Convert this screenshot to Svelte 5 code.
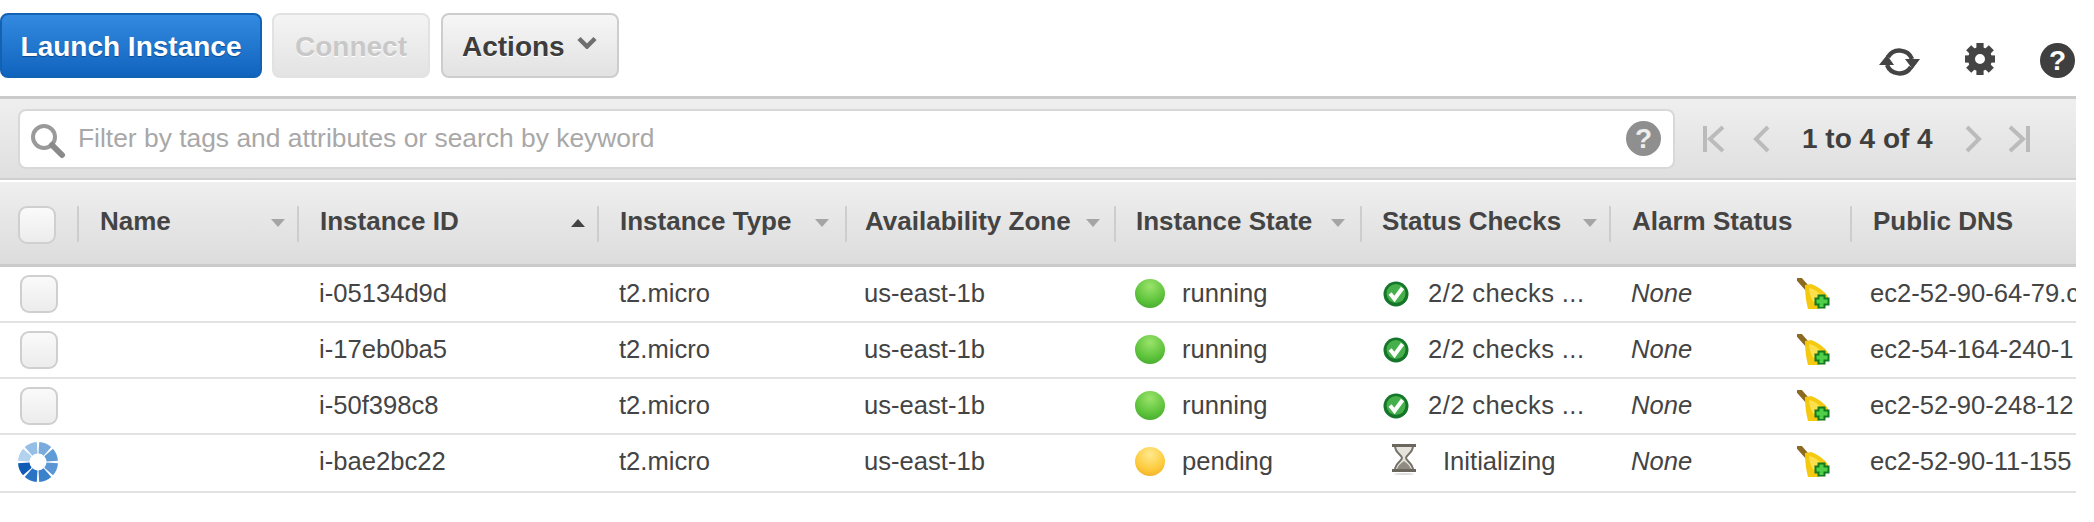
<script>
  const rows = [
    { id: 'i-05134d9d', state: 'running', status: 'ok', dns: 'ec2-52-90-64-79.compute-1.amazonaws.com' },
    { id: 'i-17eb0ba5', state: 'running', status: 'ok', dns: 'ec2-54-164-240-1' },
    { id: 'i-50f398c8', state: 'running', status: 'ok', dns: 'ec2-52-90-248-12' },
    { id: 'i-bae2bc22', state: 'pending', status: 'init', dns: 'ec2-52-90-11-155' }
  ];
  const headers = [
    { label: 'Name', sort: 'down' },
    { label: 'Instance ID', sort: 'up' },
    { label: 'Instance Type', sort: 'down' },
    { label: 'Availability Zone', sort: 'down' },
    { label: 'Instance State', sort: 'down' },
    { label: 'Status Checks', sort: 'down' },
    { label: 'Alarm Status', sort: '' },
    { label: 'Public DNS', sort: '' }
  ];
  const teeth = [0, 45, 90, 135, 180, 225, 270, 315];
  const spinColors = ['#0f5bb5', '#2a74c6', '#3b82cc', '#5a97d4', '#5f9bd6', '#7aabdd', '#95bfe6', '#b3d2ef'];
  function wedge(i) {
    const s = 180 + i * 45 + 3.5;
    const e = 180 + (i + 1) * 45 - 3.5;
    const pt = (r, a) => {
      const t = (a * Math.PI) / 180;
      return `${(20 + r * Math.cos(t)).toFixed(2)} ${(20 - r * Math.sin(t)).toFixed(2)}`;
    };
    return `M${pt(20, s)} A20 20 0 0 0 ${pt(20, e)} L${pt(8.5, e)} A8.5 8.5 0 0 1 ${pt(8.5, s)} Z`;
  }
</script>

{#snippet help(cls)}
  <span class="help {cls}">?</span>
{/snippet}

<div class="page">
  <div class="toolbar">
    <button class="btn primary">Launch Instance</button>
    <button class="btn disabled">Connect</button>
    <button class="btn actions">Actions
      <svg class="chev" width="20" height="13" viewBox="0 0 20 13"><path d="M2 2.5 10 10.5 18 2.5" fill="none" stroke="#6f6f6f" stroke-width="4.5"/></svg>
    </button>
    <div class="tools">
      <svg class="refresh" width="41" height="32" viewBox="0 0 41 32">
        <path d="M9 11A13.5 13.5 0 0 1 33 13M32 21A13.5 13.5 0 0 1 8 19" fill="none" stroke="#444" stroke-width="4.5"/>
        <path d="M26 13H41L33.5 23ZM0 19H15L8 9Z" fill="#444"/>
      </svg>
      <svg width="30" height="32" viewBox="0 0 30 32">
        <g transform="translate(15 16)">
          {#each teeth as a}
            <rect x="-3.6" y="-16" width="7.2" height="8" fill="#444" transform="rotate({a})"/>
          {/each}
          <circle r="8.5" fill="none" stroke="#444" stroke-width="7"/>
        </g>
      </svg>
      {@render help('dark')}
    </div>
  </div>

  <div class="filter">
    <div class="search">
      <svg class="glass" width="36" height="36" viewBox="0 0 36 36">
        <circle cx="14" cy="14" r="11" fill="#fff" stroke="#9a9a9a" stroke-width="4"/>
        <path d="M22 22 32 32" stroke="#8a8a8a" stroke-width="6" stroke-linecap="round"/>
      </svg>
      <span class="placeholder">Filter by tags and attributes or search by keyword</span>
      {@render help('grey')}
    </div>
    <div class="pager">
      <svg width="22" height="28" viewBox="0 0 22 28"><path d="M2 1V27M20 2 7 14 20 26" fill="none" stroke="#bbb" stroke-width="4"/></svg>
      <svg class="prev" width="17" height="28" viewBox="0 0 17 28"><path d="M15 2 3 14 15 26" fill="none" stroke="#bbb" stroke-width="4"/></svg>
      <span class="count">1 to 4 of 4</span>
      <svg class="next" width="17" height="28" viewBox="0 0 17 28"><path d="M2 2 14 14 2 26" fill="none" stroke="#bbb" stroke-width="4"/></svg>
      <svg class="end" width="22" height="28" viewBox="0 0 22 28"><path d="M2 2 15 14 2 26M20 1V27" fill="none" stroke="#bbb" stroke-width="4"/></svg>
    </div>
  </div>

  <div class="table">
    <div class="head grid">
      <div class="hcheck"><span class="box"></span></div>
      {#each headers as h}
        <div class="hcell">
          <span>{h.label}</span>
          {#if h.sort}<i class="arrow {h.sort}"></i>{/if}
        </div>
      {/each}
    </div>

    {#each rows as r, i}
      <div class="row grid" class:tail={i === 3}>
        <div class="cell first">
          {#if r.state === 'running'}
            <span class="box"></span>
          {:else}
            <svg class="spin" width="40" height="40" viewBox="0 0 40 40">
              {#each spinColors as c, n}
                <path d={wedge(n)} fill={c}/>
              {/each}
            </svg>
          {/if}
        </div>
        <div class="cell"></div>
        <div class="cell">{r.id}</div>
        <div class="cell">t2.micro</div>
        <div class="cell zone">us-east-1b</div>
        <div class="cell state"><span class="orb {r.state}"></span>{r.state}</div>
        <div class="cell status">
          {#if r.status === 'ok'}
            <svg class="check" width="26" height="26" viewBox="0 0 26 26">
              <circle cx="13" cy="13" r="12.5" fill="#15752a"/>
              <circle cx="13" cy="12.5" r="9.5" fill="#45b04a"/>
              <path d="M7 12.5 11.5 18 19.5 7" fill="none" stroke="#fff" stroke-width="4"/>
            </svg>
            <span class="wide">2/2 checks ...</span>
          {:else}
            <svg class="hour" width="26" height="32" viewBox="0 0 26 32">
              <path d="M4 3H22C22 10 15 12 15 15C15 18 22 20 22 27H4C4 20 11 18 11 15C11 12 4 10 4 3Z" fill="#e6e3dc" stroke="#77736b" stroke-width="2"/>
              <path d="M6 26C8 21 11 20 13 18C15 20 18 21 20 26Z" fill="#8f8b83"/>
              <rect x="1" y="1" width="24" height="3" fill="#6a665e"/>
              <rect x="1" y="26" width="24" height="3" fill="#6a665e"/>
              <ellipse cx="13" cy="31" rx="10" ry="1" fill="#ddd"/>
            </svg>
            Initializing
          {/if}
        </div>
        <div class="cell alarm">
          <em>None</em>
          <svg class="broom" width="34" height="31" viewBox="0 0 34 31">
            <path d="M2.5 1.5 10 10" stroke="#8c6a1f" stroke-width="5.5" stroke-linecap="round"/>
            <path d="M8 7 14 6C22 9 30 15 32 21L22 31H11C9 24 8 15 8 7Z" fill="#f5c90f"/>
            <path d="M12 10C18 11 23 15 25 19L16 24C14 19 12 15 12 10Z" fill="#fbe04e"/>
            <path d="M20.5 16.5H28.5V19.5H32.5V27.5H28.5V30.5H20.5V27.5H17.5V19.5H20.5Z" fill="#137a1f"/>
            <path d="M22.5 18.5H26.5V21.5H30.5V25.5H26.5V29H22.5V25.5H19.5V21.5H22.5Z" fill="#4fd04a"/>
          </svg>
        </div>
        <div class="cell dns">{r.dns}</div>
      </div>
    {/each}
  </div>
</div>

<style>
  :global(body) {
    margin: 0;
    background: #fff;
    font-family: "Liberation Sans", Arial, sans-serif;
    color: #444;
  }
  .page {
    width: 2076px;
    overflow: hidden;
  }
  .toolbar {
    height: 96px;
    box-sizing: border-box;
    padding-top: 13px;
    display: flex;
    align-items: flex-start;
  }
  .btn {
    height: 65px;
    box-sizing: border-box;
    border-radius: 8px;
    font: bold 28px "Liberation Sans", Arial, sans-serif;
    padding: 2px 0 0;
    margin-right: 10px;
  }
  .primary {
    width: 262px;
    color: #fff;
    background: linear-gradient(#338ae0, #1164be);
    border: 2px solid #1262b4;
    text-shadow: 0 1px 1px #0c4a8c;
  }
  .disabled {
    width: 158px;
    margin-right: 11px;
    color: #c8c8c8;
    background: linear-gradient(#f4f4f4, #e3e3e3);
    border: 2px solid #e2e2e2;
    text-shadow: 0 1px 0 #fff;
  }
  .actions {
    width: 178px;
    color: #3d3d3d;
    background: linear-gradient(#f6f6f6, #e2e2e2);
    border: 2px solid #cdcdcd;
    text-shadow: 0 1px 0 #fff;
    display: flex;
    align-items: center;
    padding-left: 19px;
  }
  .chev {
    margin: -8px 0 0 12px;
  }
  .tools {
    margin-left: auto;
    margin-right: 1px;
    margin-top: 30px;
    display: flex;
    gap: 45px;
    align-items: flex-start;
  }
  .refresh {
    margin-top: 3px;
  }
  .help {
    width: 35px;
    height: 35px;
    border-radius: 50%;
    display: flex;
    align-items: center;
    justify-content: center;
    color: #fff;
    font-weight: bold;
    font-size: 28px;
    line-height: 1;
  }
  .help.dark {
    background: #3f3f3f;
  }
  .help.grey {
    background: #8f8f8f;
    color: #eee;
    margin-left: auto;
    margin-right: 12px;
  }
  .filter {
    height: 84px;
    box-sizing: border-box;
    border-top: 3px solid #cbcbcb;
    border-bottom: 2px solid #cfcfcf;
    background: linear-gradient(#efefef, #dfdfdf);
    display: flex;
    align-items: center;
    padding-left: 18px;
  }
  .search {
    width: 1657px;
    height: 60px;
    box-sizing: border-box;
    background: #fff;
    border: 2px solid #d8d8d8;
    border-radius: 8px;
    display: flex;
    align-items: center;
    padding-left: 10px;
  }
  .glass {
    margin-right: 12px;
    margin-top: 4px;
  }
  .placeholder {
    font-size: 26.4px;
    color: #a8a8a8;
    margin-top: -1px;
  }
  .pager {
    display: flex;
    align-items: center;
    margin-left: 28px;
  }
  .prev {
    margin-left: 28px;
  }
  .count {
    font-weight: bold;
    font-size: 28px;
    color: #3f3f3f;
    margin: 0 32px;
  }
  .end {
    margin-left: 26px;
  }
  .grid {
    display: grid;
    grid-template-columns: 77px 220px 300px 248px 269px 246px 249px 241px 226px;
  }
  .head {
    margin-top: 2px;
    height: 85px;
    box-sizing: border-box;
    background: linear-gradient(#efefef, #dcdcdc);
    border-bottom: 3px solid #cbcbcb;
    padding-top: 24px;
    align-items: start;
  }
  .hcheck {
    padding-left: 18px;
  }
  .hcell {
    height: 36px;
    border-left: 2px solid #cdcdcd;
    padding-left: 21px;
    padding-right: 12px;
    padding-bottom: 6px;
    box-sizing: border-box;
    display: flex;
    align-items: center;
    justify-content: space-between;
    font-weight: bold;
    font-size: 26px;
    color: #444;
    white-space: nowrap;
  }
  .hcell:nth-child(4) {
    padding-right: 16px;
  }
  .hcell:nth-child(5) {
    padding-left: 18px;
    padding-right: 14px;
  }
  .hcell:nth-child(6) {
    padding-left: 20px;
    padding-right: 15px;
  }
  .hcell:nth-child(7) {
    padding-left: 20px;
  }
  .arrow {
    width: 0;
    height: 0;
    border-left: 7px solid transparent;
    border-right: 7px solid transparent;
    flex: none;
    margin-top: 4px;
  }
  .arrow.down {
    border-top: 8px solid #a5a5a5;
  }
  .arrow.up {
    border-bottom: 8px solid #444;
  }
  .box {
    display: block;
    width: 38px;
    height: 38px;
    box-sizing: border-box;
    border: 2px solid #cfcfcf;
    border-radius: 9px;
    background: linear-gradient(#fafafa, #ececec);
  }
  .row {
    height: 56px;
    box-sizing: border-box;
    border-bottom: 2px solid #e2e2e2;
    font-size: 25.6px;
    color: #444;
    white-space: nowrap;
  }
  .row.tail {
    height: 58px;
  }
  .row.tail .cell {
    padding-bottom: 3px;
  }
  .cell {
    display: flex;
    align-items: center;
    padding-left: 22px;
    padding-bottom: 1px;
    overflow: hidden;
  }
  .cell.first {
    padding-left: 20px;
    overflow: visible;
  }
  .cell.zone {
    padding-left: 19px;
  }
  .cell.state {
    padding-left: 21px;
  }
  .spin {
    margin-left: -2px;
    flex: none;
  }
  .orb {
    width: 30px;
    height: 29px;
    border-radius: 50%;
    margin-right: 17px;
    flex: none;
  }
  .orb.running {
    background: radial-gradient(circle at 50% 25%, #9be36b, #5cc23a 60%, #3c9f28);
  }
  .orb.pending {
    background: radial-gradient(circle at 50% 25%, #ffe98d, #fdca3b 60%, #e9a322);
  }
  .check {
    margin-left: 1px;
    margin-right: 19px;
    flex: none;
  }
  .wide {
    letter-spacing: 0.4px;
  }
  .hour {
    margin-left: 9px;
    margin-right: 26px;
    margin-top: -6px;
    flex: none;
  }
  .alarm {
    justify-content: space-between;
    padding-right: 19px;
  }
  .broom {
    flex: none;
  }
  .dns {
    padding-left: 20px;
  }
</style>
